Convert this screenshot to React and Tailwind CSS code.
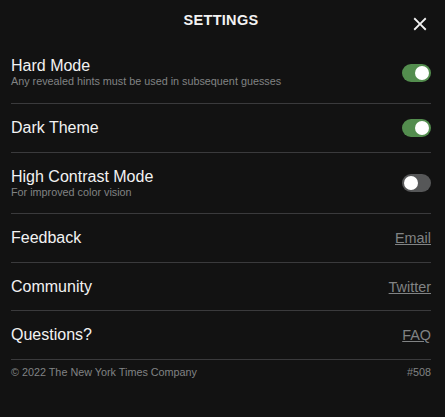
function Toggle({ on }) {
  return (
    <div
      className={
        'flex h-[18px] w-[29px] items-center rounded-full px-[2px] ' +
        (on ? 'justify-end bg-[#538d4e]' : 'justify-start bg-[#565758]')
      }
    >
      <span className="block h-[14px] w-[14px] rounded-full bg-white" />
    </div>
  )
}

function SwitchRow({ title, description, on, height }) {
  return (
    <div className={`flex items-center justify-between border-b border-[#3a3a3c] ${height}`}>
      <div>
        <div className="text-[16px] leading-[18px] text-[#f2f2f2]">{title}</div>
        {description ? (
          <div className="text-[10.8px] leading-[13px] text-[#818384]">{description}</div>
        ) : null}
      </div>
      <Toggle on={on} />
    </div>
  )
}

function LinkRow({ title, link, height }) {
  return (
    <div className={`flex items-center justify-between border-b border-[#3a3a3c] ${height}`}>
      <div className="text-[16px] leading-[18px] text-[#f2f2f2]">{title}</div>
      <a href="#" className="text-[14.4px] leading-[16px] text-[#818384] underline">
        {link}
      </a>
    </div>
  )
}

export default function App() {
  return (
    <div
      className="relative h-[417px] w-[445px] bg-[#121212] pl-[11px] pr-[14px]"
      style={{ fontFamily: '"Liberation Sans", Arial, sans-serif' }}
    >
      <header className="h-[42px] pt-[13px] text-center">
        <h1 className="text-[14.5px] font-bold leading-none tracking-[0.3px] text-[#f2f2f2]">SETTINGS</h1>
      </header>
      <button type="button" className="absolute left-[409px] top-[12.5px] text-[#f2f2f2]">
        <svg width="22" height="22" viewBox="0 0 24 24" fill="currentColor">
          <path d="M19 6.41L17.59 5 12 10.59 6.41 5 5 6.41 10.59 12 5 17.59 6.41 19 12 13.41 17.59 19 19 17.59 13.41 12z" />
        </svg>
      </button>

      <SwitchRow
        title="Hard Mode"
        description="Any revealed hints must be used in subsequent guesses"
        on
        height="h-[62px]"
      />
      <SwitchRow title="Dark Theme" on height="h-[49px]" />
      <SwitchRow
        title="High Contrast Mode"
        description="For improved color vision"
        on={false}
        height="h-[61px]"
      />
      <LinkRow title="Feedback" link="Email" height="h-[49px]" />
      <LinkRow title="Community" link="Twitter" height="h-[48px]" />
      <LinkRow title="Questions?" link="FAQ" height="h-[49px]" />

      <footer className="flex h-[24px] items-center justify-between text-[10.8px] leading-[13px] text-[#818384]">
        <span>© 2022 The New York Times Company</span>
        <span>#508</span>
      </footer>
    </div>
  )
}
